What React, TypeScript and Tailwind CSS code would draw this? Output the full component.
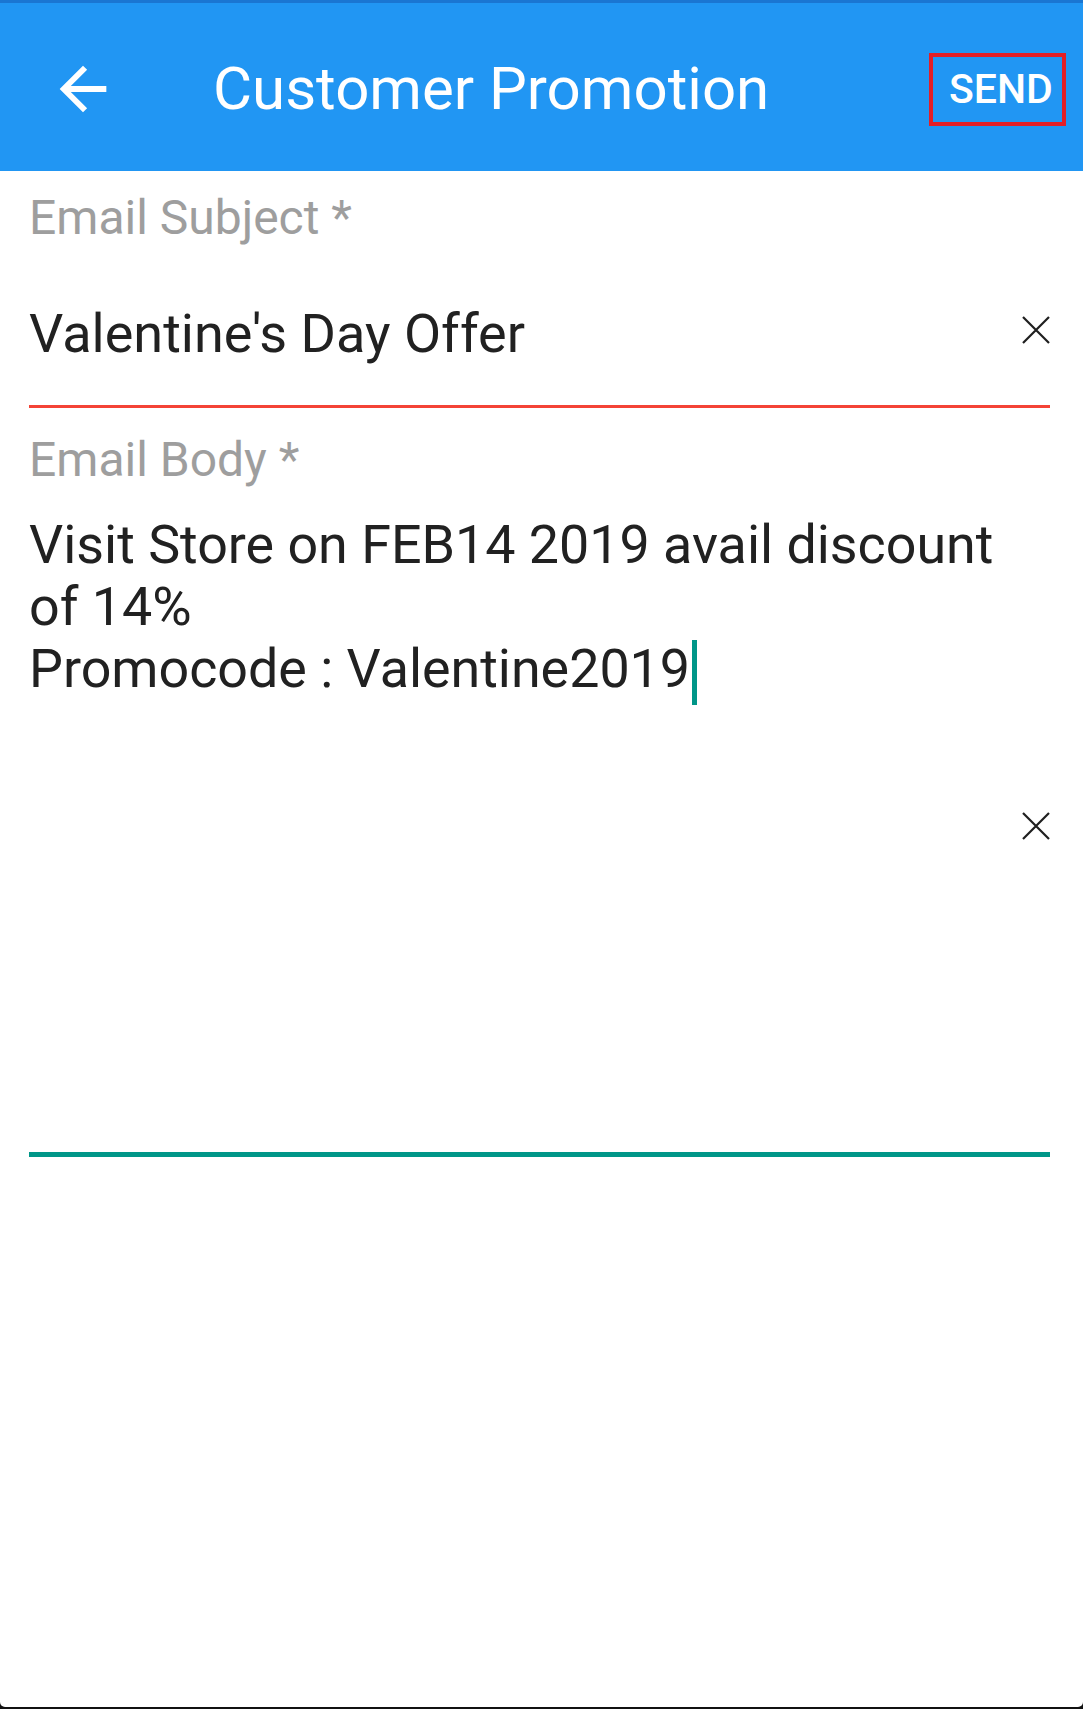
import React from 'react';

function BackArrow() {
  return (
    <svg width="70" height="70" viewBox="0 0 24 24" className="shrink-0">
      <path fill="#ffffff" d="M20 11H7.83l5.59-5.59L12 4l-8 8 8 8 1.41-1.41L7.83 13H20v-2z" />
    </svg>
  );
}

function ClearIcon({ className = '' }: { className?: string }) {
  return (
    <svg width="28" height="28" viewBox="0 0 28 28" className={`shrink-0 ${className}`}>
      <path d="M1 1L27 27M27 1L1 27" stroke="#1f1f1f" strokeWidth="2.2" fill="none" />
    </svg>
  );
}

export default function App() {
  return (
    <div className="w-[1083px] h-[1709px] bg-[#111111] flex flex-col font-[Roboto]">
      {/* app bar */}
      <div className="h-[171px] shrink-0 bg-[#2196f3] border-t-[3px] border-[#1a76d2] flex items-center pt-[4px]">
        <div className="ml-[48px]">
          <BackArrow />
        </div>
        <h1 className="ml-[95px] text-[60px] leading-[70px] text-white font-normal">Customer Promotion</h1>
        <div className="ml-auto mr-[17px] h-[73px] w-[137px] border-4 border-[#e31e26] flex items-center pl-[16px] pr-[8px]">
          <span className="text-[41px] leading-none font-medium text-white">SEND</span>
        </div>
      </div>

      {/* form */}
      <div className="flex-1 bg-white rounded-b-[5px] mb-[2px] pl-[29px] pr-[33px] pt-[19px]">
        <div className="text-[48px] leading-[56px] text-[#9e9e9e]">Email Subject *</div>

        <div className="mt-[56px] flex items-start">
          <div className="flex-1 text-[54px] leading-[64px] text-[#212121]">Valentine's Day Offer</div>
          <ClearIcon className="mt-[14px]" />
        </div>
        <div className="mt-[39px] h-[3px] bg-[#f44336]" />

        <div className="mt-[24px] text-[48px] leading-[56px] text-[#9e9e9e]">Email Body *</div>

        <div className="mt-[26px] h-[638px] flex items-center">
          <div className="self-start flex-1 pr-[20px] text-[53.8px] leading-[62px] text-[#212121]">
            Visit Store on FEB14 2019 avail discount of 14%
            <br />
            Promocode : Valentine2019
            <span className="inline-block ml-[2px] w-[5px] h-[65px] bg-[#009688] align-[-18px]" />
          </div>
          <ClearIcon className="mb-[14px]" />
        </div>
        <div className="h-[5px] bg-[#009688]" />
      </div>
    </div>
  );
}
